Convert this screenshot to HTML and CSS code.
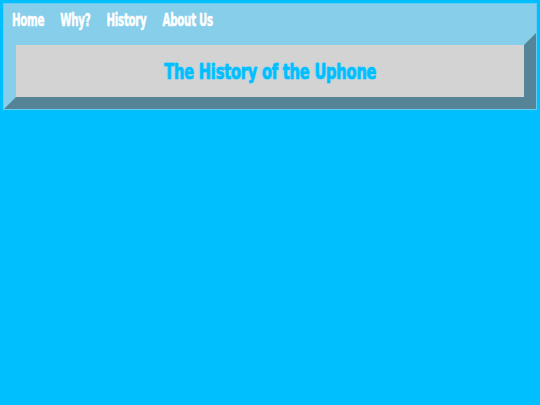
FILE: index.html
```html
<!DOCTYPE html>
<html>
<head>
<meta charset="utf-8">
<title>The History of the Uphone</title>
<link rel="stylesheet" href="styles.css">
</head>
<body>
<div class="header">
  <nav class="nav">
    <a href="#" class="nav-link">Home</a>
    <a href="#" class="nav-link">Why?</a>
    <a href="#" class="nav-link">History</a>
    <a href="#" class="nav-link">About Us</a>
  </nav>
  <h1 class="title"><span class="title-text">The History of the Uphone</span></h1>
</div>
</body>
</html>
```
FILE: styles.css
```css
html, body {
  margin: 0;
  padding: 0;
}
body {
  background: #00bfff;
  padding: 3px;
  font-family: "DejaVu Sans Condensed", "Liberation Sans", sans-serif;
  font-weight: bold;
}
.header {
  background: #87ceeb;
  border: 1px solid #66cdf2;
  overflow: hidden;
}
.nav {
  display: flex;
  gap: 24px;
  height: 27px;
  padding-top: 2px;
  align-items: center;
  padding-left: 12px;
  transform: scaleX(0.67);
  transform-origin: left center;
}
.nav-link {
  color: #ffffff;
  text-decoration: none;
  font-size: 17px;
  letter-spacing: -0.4px;
  -webkit-text-stroke: 0.5px #ffffff;
}
.title {
  margin: 0;
  height: 52px;
  display: flex;
  align-items: center;
  justify-content: center;
  background: #d3d3d3;
  border: 12px outset #87ceeb;
  color: #00bfff;
  font-size: 22px;
}
.title-text {
  display: inline-block;
  transform: scaleX(0.74);
  letter-spacing: -0.3px;
  -webkit-text-stroke: 0.6px #00bfff;
  text-shadow: 0 0 2px rgba(90, 215, 255, 0.9);
}
```
